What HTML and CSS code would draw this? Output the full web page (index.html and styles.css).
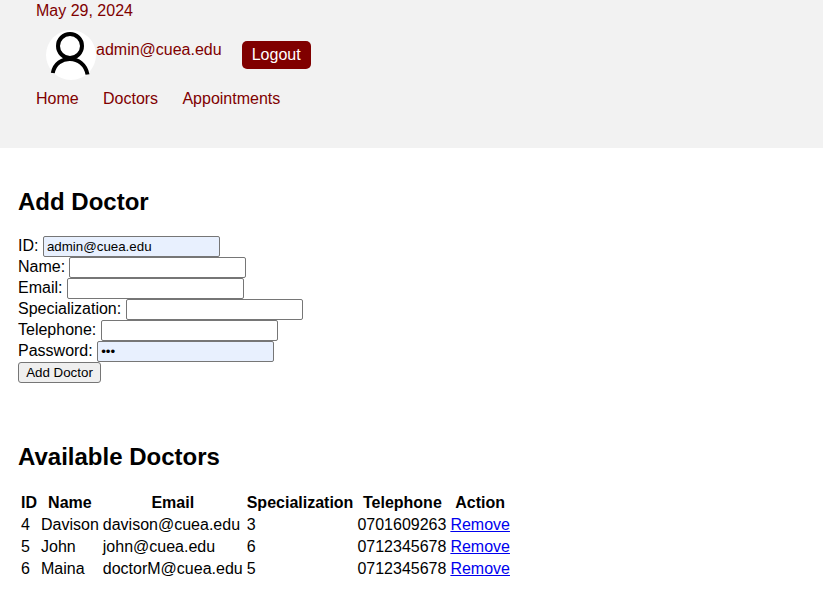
FILE: index.html
```html
<!DOCTYPE html>
<html lang="en">
<head>
<meta charset="utf-8">
<title>Doctors</title>
<link rel="stylesheet" href="styles.css">
</head>
<body>
<header class="header">
  <div class="date">May 29, 2024</div>
  <div class="user">
    <svg class="avatar" viewBox="0 0 50 50"><circle cx="25" cy="25" r="25" fill="#fff"/><g fill="none" stroke="#000" stroke-width="4"><circle cx="24" cy="16" r="12"/><path d="M6.800 43C10 24 38 24 41.500 44.500"/></g></svg>
    <span class="email">admin@cuea.edu</span>
    <a class="logout">Logout</a>
  </div>
  <nav class="nav"><a>Home</a><a>Doctors</a><a>Appointments</a></nav>
</header>
<main class="main">
  <section class="add">
    <h2>Add Doctor</h2>
    <form>
      <div class="row"><label>ID:</label><input class="filled" type="text" value="admin@cuea.edu"></div>
      <div class="row"><label class="tight">Name:</label><input type="text"></div>
      <div class="row"><label>Email:</label><input type="text"></div>
      <div class="row"><label>Specialization:</label><input type="text"></div>
      <div class="row"><label>Telephone:</label><input type="text"></div>
      <div class="row"><label>Password:</label><input class="filled" type="password" value="123"></div>
      <button type="button">Add Doctor</button>
    </form>
  </section>
  <section>
    <h2>Available Doctors</h2>
    <table>
      <tr><th>ID</th><th>Name</th><th>Email</th><th>Specialization</th><th class="phone">Telephone</th><th>Action</th></tr>
      <tr><td>4</td><td>Davison</td><td>davison@cuea.edu</td><td>3</td><td>0701609263</td><td><a href="#">Remove</a></td></tr>
      <tr><td>5</td><td>John</td><td>john@cuea.edu</td><td>6</td><td>0712345678</td><td><a href="#">Remove</a></td></tr>
      <tr><td>6</td><td>Maina</td><td>doctorM@cuea.edu</td><td>5</td><td>0712345678</td><td><a href="#">Remove</a></td></tr>
    </table>
  </section>
</main>
</body>
</html>
```
FILE: styles.css
```css
* { box-sizing: border-box; }
body { margin: 0; font: 16px/18px "Liberation Sans", Arial, sans-serif; color: #000; overflow: hidden; }
.header { height: 148px; background: #f2f2f2; color: maroon; padding: 2px 36px 0; }
.user { display: flex; height: 50px; margin: 10px 0 0 10px; }
.avatar { width: 50px; height: 50px; }
.email { margin-top: 11px; }
.logout { margin: 11px 0 0 20px; width: 69px; height: 28px; line-height: 28px; text-align: center; background: maroon; color: #fff; border-radius: 5px; }
.nav { display: flex; gap: 24.3px; margin-top: 10px; }
.main { padding: 40px 18px 0; }
h2 { margin: 0 0 20px; font-size: 24px; line-height: 28px; }
.add { height: 255px; }
.row { display: flex; align-items: flex-start; height: 21px; }
.row label { margin-right: 4.45px; line-height: 19px; }
.row .tight { margin-right: 4px; }
input { width: 177px; height: 21px; margin: 0; padding: 1px 3px; border: 1px solid #767676; border-radius: 2px; background: #fff; font: 13.333px "Liberation Sans", Arial, sans-serif; }
.filled { background: #e8f0fe; }
button { display: block; width: 83px; height: 21px; padding: 0; border: 1px solid #767676; border-radius: 3px; background: #efefef; font: 13.333px "Liberation Sans", Arial, sans-serif; }
table { border-spacing: 2px; }
th, td { padding: 1px; }
.phone { padding-left: 2px; }
a[href] { color: #0000ee; }
```
